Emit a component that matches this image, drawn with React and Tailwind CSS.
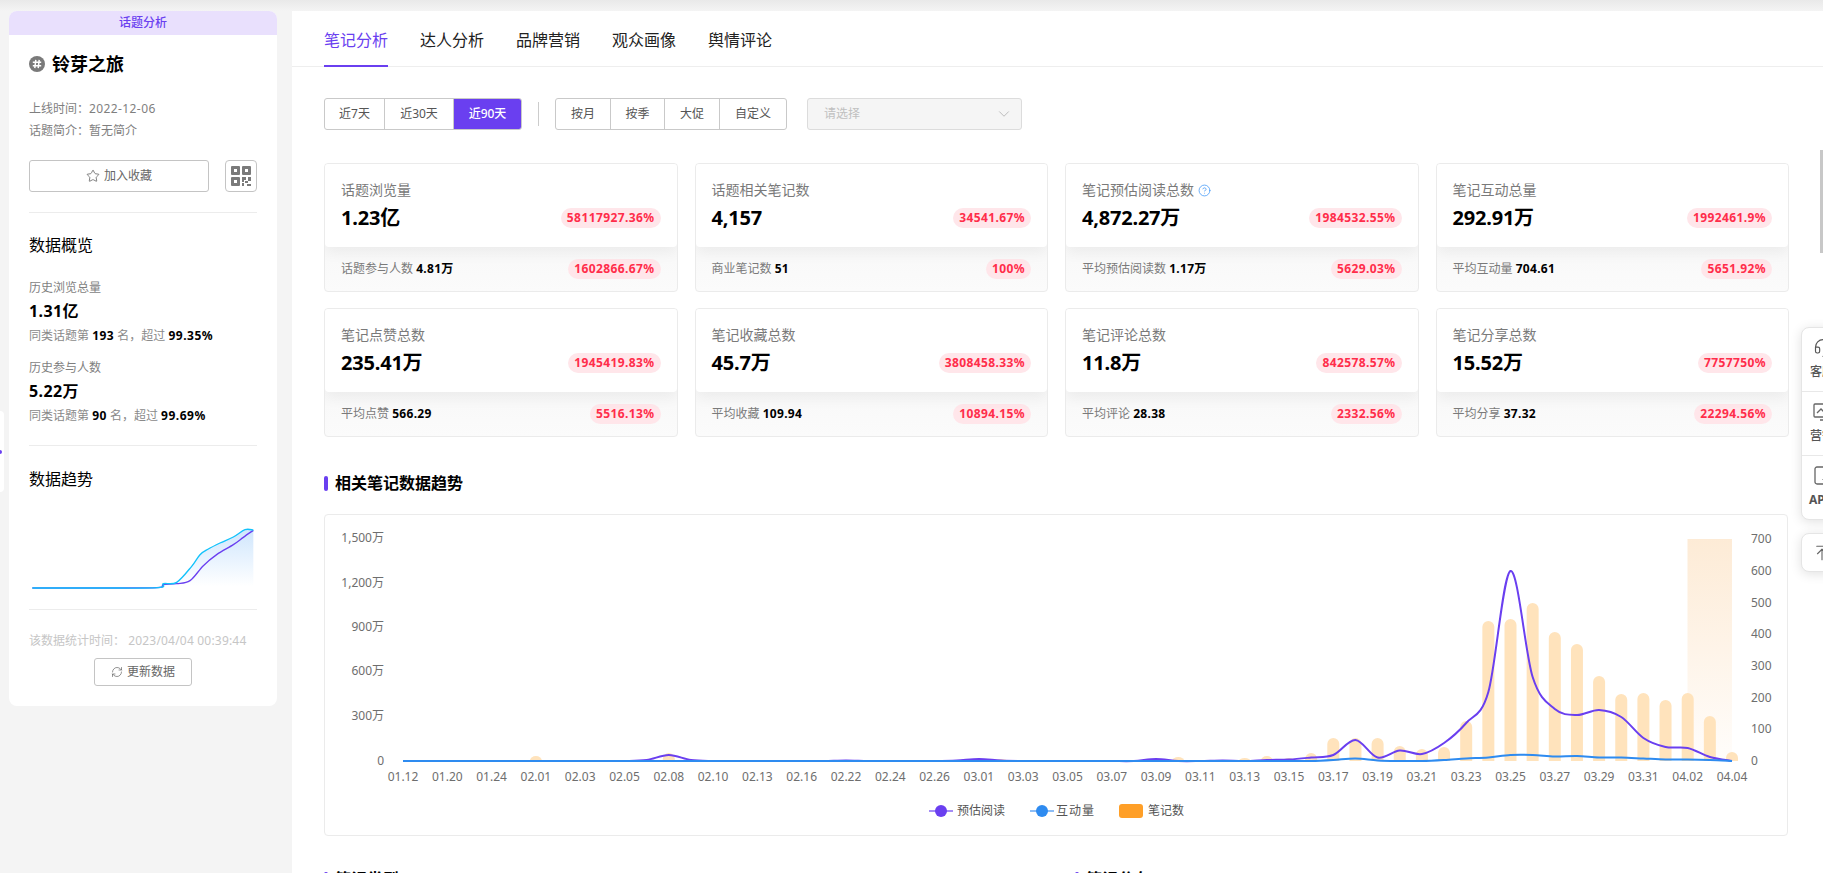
import { ArrowUpToLine, ChevronDown, CircleHelp, Headset, RefreshCw, Star } from "lucide-react";

const TABS = ["笔记分析", "达人分析", "品牌营销", "观众画像", "舆情评论"];

const RANGE_BTNS = [
  { label: "近7天", cls: "w-[60px]" },
  { label: "近30天", cls: "w-[69px]" },
  { label: "近90天", cls: "w-[67px] bg-[#6a3ff0] text-white font-medium" },
];

const PERIOD_BTNS = [
  { label: "按月", cls: "w-[55px]" },
  { label: "按季", cls: "w-[54px]" },
  { label: "大促", cls: "w-[55px]" },
  { label: "自定义", cls: "w-[66px]" },
];

const CARDS = [
  { title: "话题浏览量", value: "1.23亿", pct: "58117927.36%", sub: "话题参与人数", subValue: "4.81万", subPct: "1602866.67%" },
  { title: "话题相关笔记数", value: "4,157", pct: "34541.67%", sub: "商业笔记数", subValue: "51", subPct: "100%" },
  { title: "笔记预估阅读总数", help: true, value: "4,872.27万", pct: "1984532.55%", sub: "平均预估阅读数", subValue: "1.17万", subPct: "5629.03%" },
  { title: "笔记互动总量", value: "292.91万", pct: "1992461.9%", sub: "平均互动量", subValue: "704.61", subPct: "5651.92%" },
  { title: "笔记点赞总数", value: "235.41万", pct: "1945419.83%", sub: "平均点赞", subValue: "566.29", subPct: "5516.13%" },
  { title: "笔记收藏总数", value: "45.7万", pct: "3808458.33%", sub: "平均收藏", subValue: "109.94", subPct: "10894.15%" },
  { title: "笔记评论总数", value: "11.8万", pct: "842578.57%", sub: "平均评论", subValue: "28.38", subPct: "2332.56%" },
  { title: "笔记分享总数", value: "15.52万", pct: "7757750%", sub: "平均分享", subValue: "37.32", subPct: "22294.56%" },
];

const X_LABELS = [
  "01.12", "01.20", "01.24", "02.01", "02.03", "02.05", "02.08", "02.10", "02.13", "02.16", "02.22",
  "02.24", "02.26", "03.01", "03.03", "03.05", "03.07", "03.09", "03.11", "03.13", "03.15", "03.17",
  "03.19", "03.21", "03.23", "03.25", "03.27", "03.29", "03.31", "04.02", "04.04",
];

const BASE_Y = 761;
const xAt = (i) => 403 + i * 22.15;

// heights above the axis, in px, by category index
const BARS = {
  6: 5, 12: 8, 27: 2, 35: 4, 38: 3, 39: 5, 40: 3, 41: 8, 42: 23, 43: 23, 44: 23, 45: 15, 46: 12, 47: 14,
  48: 40, 49: 140, 50: 142, 51: 158, 52: 129, 53: 117, 54: 85, 55: 67, 56: 68, 57: 61, 58: 68, 59: 45, 60: 9,
};
const READS = {
  11: 1, 12: 6, 13: 1, 20: 0.5, 25: 0.5, 26: 2, 27: 0.5, 34: 2, 37: 0.5, 39: 1, 40: 1.5, 41: 3.5, 42: 6, 43: 21,
  44: 3.5, 45: 10.5, 46: 7, 47: 18, 48: 38, 49: 69, 50: 190, 51: 84, 52: 52, 53: 46, 54: 51, 55: 44, 56: 23,
  57: 14, 58: 13, 59: 4,
};
const INTERACTS = {
  42: 1, 43: 2.5, 44: 0.5, 47: 1, 48: 2.5, 49: 3.5, 50: 6, 51: 6, 52: 4.5, 53: 5, 54: 3.5, 55: 3.5, 56: 2.5,
  57: 1.5, 58: 1.5, 59: 1,
};

const smoothPath = (pts) => {
  let d = `M${pts[0][0]} ${pts[0][1]}`;
  for (let i = 0; i < pts.length - 1; i++) {
    const p0 = pts[i - 1] || pts[i];
    const p1 = pts[i];
    const p2 = pts[i + 1];
    const p3 = pts[i + 2] || p2;
    const c1x = p1[0] + (p2[0] - p0[0]) / 6;
    const c1y = p1[1] + (p2[1] - p0[1]) / 6;
    const c2x = p2[0] - (p3[0] - p1[0]) / 6;
    const c2y = p2[1] - (p3[1] - p1[1]) / 6;
    d += ` C${c1x} ${c1y} ${c2x} ${c2y} ${p2[0]} ${p2[1]}`;
  }
  return d;
};

const linePath = (values) =>
  smoothPath(Array.from({ length: 61 }, (_, i) => [xAt(i), BASE_Y - (values[i] || 0)]));

const barPath = (i, h) => {
  const r = Math.min(6, h);
  const x = xAt(i);
  return `M${x - 6} ${BASE_Y} V${BASE_Y - h + r} A6 ${r} 0 0 1 ${x + 6} ${BASE_Y - h + r} V${BASE_Y} Z`;
};

const TopicIcon = () => (
  <svg width="16" height="16" viewBox="0 0 16 16">
    <circle cx="8" cy="8" r="8" fill="#7a7a7a" />
    <path d="M6.8 3.8l-1 8.4M10.2 3.8l-1 8.4M3.8 6.3h8.4M3.8 9.7h8.4" stroke="#fff" strokeWidth="1.5" />
  </svg>
);

const QrIcon = () => (
  <svg width="20" height="20" viewBox="0 0 20 20" fill="#7a7a7a">
    <path fillRule="evenodd" d="M0 1a1 1 0 0 1 1-1h7a1 1 0 0 1 1 1v7a1 1 0 0 1-1 1H1a1 1 0 0 1-1-1zM3 3v3h3V3z" />
    <path fillRule="evenodd" d="M11 1a1 1 0 0 1 1-1h7a1 1 0 0 1 1 1v7a1 1 0 0 1-1 1h-7a1 1 0 0 1-1-1zM14 3v3h3V3z" />
    <path fillRule="evenodd" d="M0 12a1 1 0 0 1 1-1h7a1 1 0 0 1 1 1v7a1 1 0 0 1-1 1H1a1 1 0 0 1-1-1zM3 14v3h3v-3z" />
    <path d="M11 11h4v3h-2v2h-2zM17 11h3v4h-3zM14 15h3v2h-3zM11 17h2v3h-2zM16 18h4v2h-4z" />
  </svg>
);

const Sparkline = () => (
  <svg width="228" height="80" viewBox="87 220 684 240" className="mt-[22px] block">
    <defs>
      <linearGradient id="sparkFill" x1="0" y1="0" x2="0" y2="1">
        <stop offset="0" stopColor="#cfe6fd" />
        <stop offset="1" stopColor="#ffffff" />
      </linearGradient>
    </defs>
    <path
      d={smoothPath([[530, 428], [575, 380], [600, 345], [625, 328], [660, 310], [700, 292], [735, 270], [760, 271]]) + " V440 H530 Z"}
      fill="url(#sparkFill)"
    />
    <path
      d={smoothPath([[97, 445], [300, 445], [470, 444], [490, 435], [530, 432], [570, 423], [610, 378], [650, 345], [700, 315], [730, 293], [760, 272]])}
      fill="none"
      stroke="#6a3ff0"
      strokeWidth="4"
    />
    <path
      d={smoothPath([[97, 445], [300, 445], [475, 444], [490, 432], [530, 428], [575, 380], [600, 345], [625, 328], [660, 310], [700, 292], [735, 270], [760, 271]])}
      fill="none"
      stroke="#12c2fb"
      strokeWidth="4"
    />
  </svg>
);

const RankLine = ({ rank, pct }) => (
  <p className="mt-[2px] text-xs leading-5 text-[#8a8a8a]">
    同类话题第 <b className="tracking-[0.5px] text-black">{rank}</b> 名，超过 <b className="tracking-[0.5px] text-black">{pct}</b>
  </p>
);

const Sidebar = () => (
  <aside className="w-[292px] shrink-0 pl-[9px] pt-[11px]">
    <div className="w-[268px] overflow-hidden rounded-lg bg-white">
      <div className="h-6 bg-[#e9e0fd] text-center text-xs font-medium leading-6 text-[#6a3ff0]">话题分析</div>
      <div className="px-5 pb-5">
        <div className="flex h-6 items-center gap-[7px] mt-[17px]">
          <TopicIcon />
          <h1 className="text-lg font-bold text-black">铃芽之旅</h1>
        </div>
        <div className="mt-[22px] text-xs leading-[22px] text-[#7f7f7f]">
          <p>上线时间：<span className="tracking-[0.4px]">2022-12-06</span></p>
          <p>话题简介：暂无简介</p>
        </div>
        <div className="mt-[18px] flex justify-between">
          <button className="flex h-8 w-[180px] items-center justify-center gap-1 rounded-[3px] border border-[#c4c4c4] text-xs text-[#666]">
            <Star size={14} strokeWidth={1.4} />
            加入收藏
          </button>
          <button className="flex size-8 items-center justify-center rounded-[4px] border border-[#c4c4c4]">
            <QrIcon />
          </button>
        </div>
        <div className="mt-5 h-px bg-[#ececec]" />
        <h2 className="mt-5 text-base leading-6 text-black">数据概览</h2>
        <p className="mt-[21px] text-xs leading-5 text-[#7f7f7f]">历史浏览总量</p>
        <p className="text-base font-bold leading-[26px] tracking-[0.4px] text-black">1.31亿</p>
        <RankLine rank="193" pct="99.35%" />
        <p className="mt-3 text-xs leading-5 text-[#7f7f7f]">历史参与人数</p>
        <p className="text-base font-bold leading-[26px] tracking-[0.4px] text-black">5.22万</p>
        <RankLine rank="90" pct="99.69%" />
        <div className="mt-[19px] h-px bg-[#ececec]" />
        <h2 className="mt-[21px] text-base leading-6 text-black">数据趋势</h2>
        <Sparkline />
        <div className="mt-4 h-px bg-[#ececec]" />
        <p className="mt-[21px] whitespace-nowrap text-xs leading-5 text-[#c6c6c6]">
          该数据统计时间： <span className="tracking-[0.2px]">2023/04/04 00:39:44</span>
        </p>
        <button className="mx-auto mt-[7px] flex h-7 w-[98px] items-center justify-center gap-1 rounded-[3px] border border-[#c4c4c4] text-xs text-[#666]">
          <RefreshCw size={12} strokeWidth={1.4} />
          更新数据
        </button>
      </div>
    </div>
  </aside>
);

const Pill = ({ children }) => (
  <span className="flex h-5 items-center rounded-full bg-[#ffe6ea] px-[6px] text-xs font-bold tracking-[0.4px] text-[#ff2d4a]">
    {children}
  </span>
);

const StatCard = ({ card }) => (
  <div className="h-[129px] overflow-hidden rounded-[4px] border border-[#ebebeb] bg-gradient-to-b from-[#f3f3f3] to-[#fbfbfb]">
    <div className="relative h-[83px] rounded-b-[4px] bg-white px-4 pt-4 shadow-[0_6px_14px_rgba(0,0,0,0.05)]">
      <p className="flex items-center gap-1 text-sm leading-5 text-[#7a7a7a]">
        {card.title}
        {card.help && <CircleHelp size={13} strokeWidth={1.5} className="text-[#4a9df8]" />}
      </p>
      <div className="mt-2 flex items-center justify-between">
        <span className="text-xl font-bold leading-5 tracking-[-0.2px] text-black">{card.value}</span>
        <Pill>{card.pct}</Pill>
      </div>
    </div>
    <div className="flex h-[44px] items-center justify-between px-4">
      <span className="text-xs text-[#7a7a7a]">
        {card.sub} <b className="tracking-[0.3px] text-black">{card.subValue}</b>
      </span>
      <Pill>{card.subPct}</Pill>
    </div>
  </div>
);

const SectionTitle = ({ children }) => (
  <h3 className="flex h-6 items-center gap-[7px] text-base font-bold text-black">
    <span className="h-[15px] w-1 rounded-sm bg-[#6a3ff0]" />
    {children}
  </h3>
);

const TrendChart = () => {
  const leftLabels = [["1,500万", 537], ["1,200万", 582], ["900万", 626], ["600万", 670], ["300万", 715], ["0", 760]];
  const rightLabels = [["700", 538], ["600", 570], ["500", 602], ["400", 633], ["300", 665], ["200", 697], ["100", 728], ["0", 760]];
  return (
    <div className="mt-[19px] h-[322px] overflow-hidden rounded-[4px] border border-[#ebebeb]">
      <svg width="1464" height="322" viewBox="325 515 1464 322" className="block" fontSize="12" fill="#6e6e6e">
        <defs>
          <linearGradient id="hoverBand" x1="0" y1="0" x2="0" y2="1">
            <stop offset="0" stopColor="#fdebd6" />
            <stop offset="1" stopColor="#fffdfb" />
          </linearGradient>
        </defs>
        {leftLabels.map(([t, y]) => (
          <text key={t} x="384" y={y} textAnchor="end" dominantBaseline="central">{t}</text>
        ))}
        {rightLabels.map(([t, y]) => (
          <text key={t} x="1751" y={y} dominantBaseline="central">{t}</text>
        ))}
        {X_LABELS.map((t, i) => (
          <text key={t} x={xAt(i * 2)} y="776" textAnchor="middle" dominantBaseline="central">{t}</text>
        ))}
        <rect x="1687.5" y="539" width="44.5" height="222" fill="url(#hoverBand)" />
        {Object.entries(BARS).map(([i, h]) => (
          <path key={i} d={barPath(Number(i), h)} fill="#ffe3bc" />
        ))}
        <path d={linePath(READS)} fill="none" stroke="#6a3ff0" strokeWidth="2" />
        <path d={linePath(INTERACTS)} fill="none" stroke="#2e8bf0" strokeWidth="2" />
        <path d="M929 811h24" stroke="#a48cf6" strokeWidth="2" />
        <circle cx="941" cy="811" r="6" fill="#6a3ff0" />
        <text x="957" y="810" fill="#555" dominantBaseline="central">预估阅读</text>
        <path d="M1030 811h24" stroke="#8cbdf6" strokeWidth="2" />
        <circle cx="1042" cy="811" r="6" fill="#2e8bf0" />
        <text x="1056" y="810" fill="#555" dominantBaseline="central" letterSpacing="1">互动量</text>
        <rect x="1119" y="804" width="24" height="14" rx="3" fill="#ff9f27" />
        <text x="1148" y="810" fill="#555" dominantBaseline="central">笔记数</text>
      </svg>
    </div>
  );
};

const MainPanel = () => (
  <main className="mt-[11px] h-[862px] min-w-0 flex-1 overflow-hidden bg-white">
    <nav className="flex h-[56px] gap-8 border-b border-[#eeeeee] px-8">
      {TABS.map((tab, i) => (
        <a
          key={tab}
          className={
            i === 0
              ? "h-[56px] border-b-2 border-[#6a3ff0] pt-[17px] text-base leading-6 text-[#6a3ff0]"
              : "h-[56px] pt-[17px] text-base leading-6 text-[#222]"
          }
        >
          {tab}
        </a>
      ))}
    </nav>
    <div className="w-[1528px] pl-8">
      <div className="mt-[31px] flex h-8 items-center">
        <div className="flex h-8 overflow-hidden rounded-[3px] border border-[#c9c9c9] text-xs text-[#555]">
          {RANGE_BTNS.map((b) => (
            <button key={b.label} className={`border-r border-[#c9c9c9] last:border-r-0 ${b.cls}`}>{b.label}</button>
          ))}
        </div>
        <span className="mx-4 h-6 w-px bg-[#cccccc]" />
        <div className="flex h-8 overflow-hidden rounded-[3px] border border-[#c9c9c9] text-xs text-[#555]">
          {PERIOD_BTNS.map((b) => (
            <button key={b.label} className={`border-r border-[#c9c9c9] last:border-r-0 ${b.cls}`}>{b.label}</button>
          ))}
        </div>
        <div className="ml-5 flex h-8 w-[215px] items-center justify-between rounded-[3px] border border-[#dcdcdc] bg-[#f5f5f5] pl-4 pr-2 text-xs text-[#c0c0c0]">
          请选择
          <ChevronDown size={18} strokeWidth={1} className="text-[#aaaaaa]" />
        </div>
      </div>
      <div className="mt-[33px] grid w-[1465px] grid-cols-4 gap-x-[17px] gap-y-4">
        {CARDS.map((card) => (
          <StatCard key={card.title} card={card} />
        ))}
      </div>
      <div className="mt-[34px] w-[1464px]">
        <SectionTitle>相关笔记数据趋势</SectionTitle>
        <TrendChart />
      </div>
      <div className="mt-[31px] grid w-[1464px] grid-cols-[751px_1fr]">
        <SectionTitle>笔记类型</SectionTitle>
        <SectionTitle>笔记分布</SectionTitle>
      </div>
    </div>
  </main>
);

const ServiceRail = () => (
  <>
    <div className="absolute left-[1801px] top-[327px] w-[60px] rounded-lg border border-[#e5e5e5] bg-white text-xs text-[#555] shadow-[0_2px_12px_rgba(0,0,0,0.12)]">
      <div className="h-[64px] border-b border-[#e8e8e8] pl-[8px] pt-[10px]">
        <Headset size={20} strokeWidth={1.4} className="ml-[3px]" />
        <p className="mt-[4px] font-medium leading-5">客服</p>
      </div>
      <div className="h-[64px] border-b border-[#e8e8e8] pl-[8px] pt-[10px]">
        <svg width="20" height="20" viewBox="0 0 20 20" fill="none" stroke="#666" strokeWidth="1.3" className="ml-[3px]">
          <rect x="1" y="2" width="18" height="13" rx="1" />
          <path d="M4 11l4-4 3 3 4-4M7 18h6" />
        </svg>
        <p className="mt-[4px] font-medium leading-5">营销</p>
      </div>
      <div className="h-[63px] pl-[7px] pt-[10px]">
        <svg width="20" height="20" viewBox="0 0 20 20" fill="none" stroke="#666" strokeWidth="1.3" className="ml-[4px]">
          <rect x="2" y="1" width="16" height="17" rx="2" />
          <path d="M10 13v.5" stroke="#666" strokeWidth="2" />
        </svg>
        <p className="mt-[4px] font-bold leading-5">API</p>
      </div>
    </div>
    <div className="absolute left-[1801px] top-[533px] flex h-[39px] w-[60px] items-center rounded-lg border border-[#e5e5e5] bg-white pl-[11px] text-[#666] shadow-[0_2px_12px_rgba(0,0,0,0.12)]">
      <ArrowUpToLine size={18} strokeWidth={1.5} />
    </div>
  </>
);

export default function App() {
  return (
    <div className="relative flex h-[873px] w-[1823px] overflow-hidden bg-[#f4f4f4] bg-[linear-gradient(#e9e9e9_0,#f4f4f4_11px)] font-['Noto_Sans','Noto_Sans_CJK_SC',sans-serif]">
      <Sidebar />
      <MainPanel />
      <div className="absolute left-0 top-[411px] h-[81px] w-1 rounded-r bg-white">
        <span className="absolute left-0 top-[39px] h-[4px] w-[2px] rounded-r bg-[#6a3ff0]" />
      </div>
      <ServiceRail />
      <div className="absolute right-0 top-[150px] h-[103px] w-[3px] bg-[#c8c8c8]" />
    </div>
  );
}
